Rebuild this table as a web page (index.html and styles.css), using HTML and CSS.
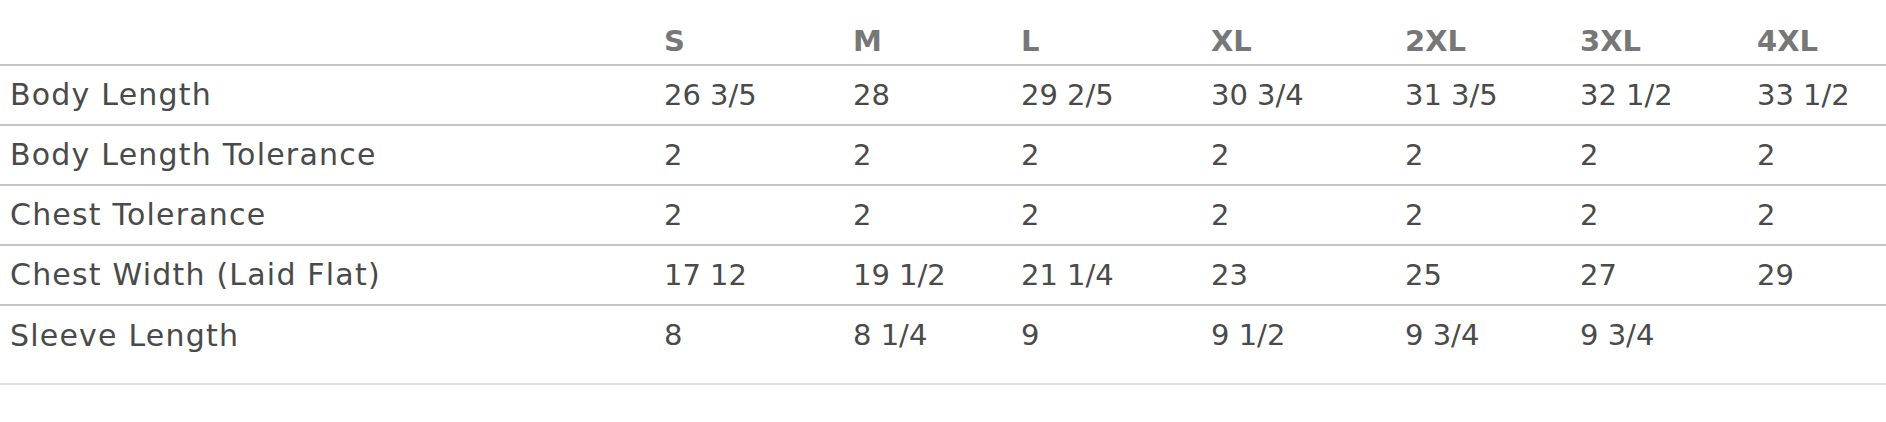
FILE: index.html
```html
<!DOCTYPE html>
<html lang="en">
<head>
<meta charset="utf-8">
<title>Size Chart</title>
<link rel="stylesheet" href="styles.css">
</head>
<body>
<div class="chart">
  <table class="size-table">
    <colgroup>
      <col class="c-label">
      <col class="c-s">
      <col class="c-m">
      <col class="c-l">
      <col class="c-xl">
      <col class="c-2xl">
      <col class="c-3xl">
      <col class="c-4xl">
    </colgroup>
    <thead>
      <tr>
        <th></th>
        <th>S</th>
        <th>M</th>
        <th>L</th>
        <th>XL</th>
        <th>2XL</th>
        <th>3XL</th>
        <th>4XL</th>
      </tr>
    </thead>
    <tbody>
      <tr>
        <td class="label">Body Length</td>
        <td>26 3/5</td><td>28</td><td>29 2/5</td><td>30 3/4</td><td>31 3/5</td><td>32 1/2</td><td>33 1/2</td>
      </tr>
      <tr>
        <td class="label">Body Length Tolerance</td>
        <td>2</td><td>2</td><td>2</td><td>2</td><td>2</td><td>2</td><td>2</td>
      </tr>
      <tr>
        <td class="label">Chest Tolerance</td>
        <td>2</td><td>2</td><td>2</td><td>2</td><td>2</td><td>2</td><td>2</td>
      </tr>
      <tr>
        <td class="label">Chest Width (Laid Flat)</td>
        <td>17 12</td><td>19 1/2</td><td>21 1/4</td><td>23</td><td>25</td><td>27</td><td>29</td>
      </tr>
      <tr>
        <td class="label">Sleeve Length</td>
        <td>8</td><td>8 1/4</td><td>9</td><td>9 1/2</td><td>9 3/4</td><td>9 3/4</td><td></td>
      </tr>
    </tbody>
  </table>
</div>
</body>
</html>
```
FILE: styles.css
```css
html, body {
  margin: 0;
  padding: 0;
  background: #ffffff;
}

body {
  font-family: "DejaVu Sans", "Liberation Sans", sans-serif;
  color: #4a4a4a;
}

.chart {
  width: 1886px;
  padding-bottom: 18px;
  border-bottom: 2px solid #e0e0e0;
}

.size-table {
  width: 100%;
  border-collapse: collapse;
  table-layout: fixed;
}

.c-label { width: 654px; }
.c-s { width: 189px; }
.c-m { width: 168px; }
.c-l { width: 190px; }
.c-xl { width: 194px; }
.c-2xl { width: 175px; }
.c-3xl { width: 177px; }
.c-4xl { width: 139px; }

.size-table th {
  height: 65px;
  padding: 0 0 8px 10px;
  box-sizing: border-box;
  text-align: left;
  vertical-align: bottom;
  font-size: 29px;
  font-weight: 700;
  color: #777777;
  line-height: 1;
  border-bottom: 2px solid #c4c4c4;
}

.size-table td {
  height: 60px;
  padding: 0 0 0 10px;
  box-sizing: border-box;
  text-align: left;
  vertical-align: middle;
  font-size: 29px;
  line-height: 1;
  white-space: nowrap;
  border-bottom: 2px solid #c4c4c4;
}

.size-table tbody tr:last-child td {
  border-bottom: none;
}

.size-table td.label {
  font-size: 30px;
  letter-spacing: 1.2px;
}
```
